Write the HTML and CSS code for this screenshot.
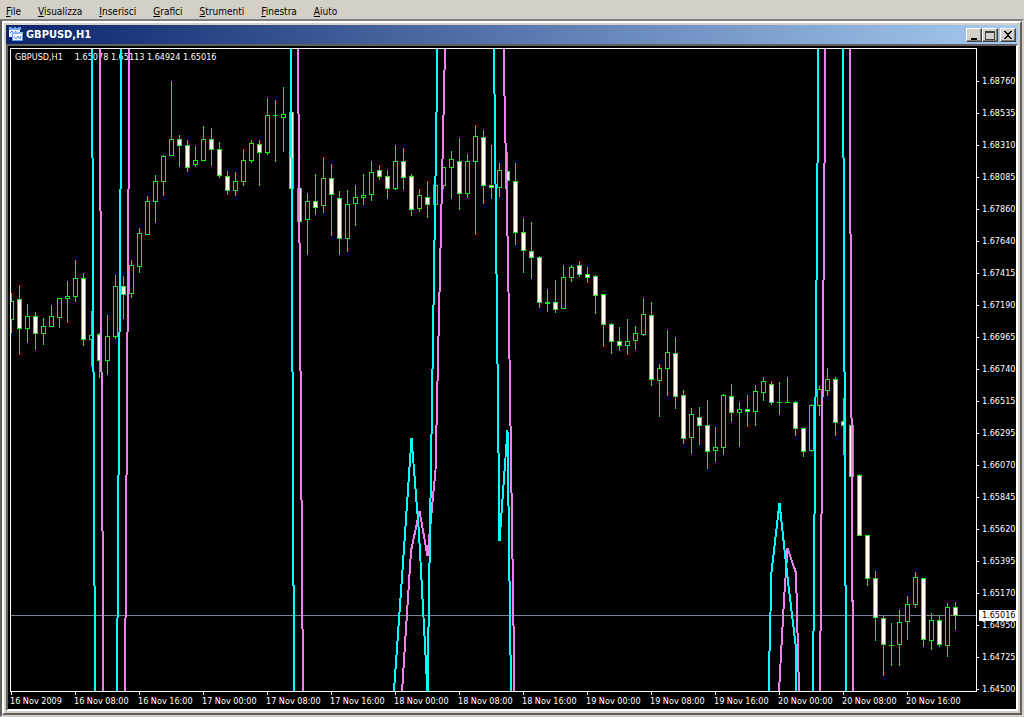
FILE: index.html
```html
<!DOCTYPE html>
<html lang="it">
<head>
<meta charset="utf-8">
<title>GBPUSD,H1</title>
<link rel="stylesheet" href="styles.css">
</head>
<body>
<nav class="menu">
  <button class="menu-item"><u>F</u>ile</button>
  <button class="menu-item"><u>V</u>isualizza</button>
  <button class="menu-item"><u>I</u>nserisci</button>
  <button class="menu-item"><u>G</u>rafici</button>
  <button class="menu-item"><u>S</u>trumenti</button>
  <button class="menu-item"><u>F</u>inestra</button>
  <button class="menu-item"><u>A</u>iuto</button>
</nav>
<main class="workspace">
  <section class="window">
    <header class="titlebar">
      <svg class="title-icon" viewBox="0 0 15 15" aria-hidden="true">
        <path d="M0 1h11v9H0z" fill="#e8f2ff"/>
        <path d="M0 0h3v1h2V0h2v1h2V0h3v3H0z" fill="#6fa8f0"/>
        <path d="M1 6l2-2 2 3 2-3" fill="none" stroke="#3f7fd8"/>
        <path d="M3.500 5.500h10v8h-10z" fill="#fff" stroke="#5f9cf0"/>
        <path d="M3 5h11v2H3z" fill="#8fbcf8"/>
        <path d="M5 9l2 3 2-3 2 3 1-3" fill="none" stroke="#4a86dc"/>
      </svg>
      <h1 class="title">GBPUSD,H1</h1>
      <div class="controls">
        <button class="control" aria-label="Riduci a icona"><svg viewBox="0 0 12 10"><path d="M3 8h6v2H3z"/></svg></button>
        <button class="control" aria-label="Ingrandisci"><svg viewBox="0 0 12 10"><path fill="#404040" fill-rule="evenodd" d="M1 1h10v9H1zM2 3v6h8V3z"/></svg></button>
        <button class="control control-close" aria-label="Chiudi"><svg viewBox="0 0 12 10"><path d="M2 1h2v1h1v1h2V2h1V1h2v1H9v1H8v1H7v2h1v1h1v1h1v1H8V8H7V7H5v1H4v1H2V8h1V7h1V6h1V4H4V3H3V2H2z"/></svg></button>
      </div>
    </header>
    <div class="chart">
      <div class="plot">
        <p class="quote"><span>GBPUSD,H1</span><span>1.65078 1.65113 1.64924 1.65016</span></p>
        <svg class="canvas" id="canvas" viewBox="11 49 965 642" preserveAspectRatio="none">
          <path class="bid" d="M11 615.5H976"/>
          <g id="candles"></g>
          <g class="line violet">
            <path d="M99.5 49L103.5 691M129.5 49L125 691M298 49L303 691"/>
            <path d="M402 692L404 660L411 551L419.500 511L427.500 556L435.500 470L445 49"/>
            <path d="M503.500 49L508 258L514.500 692"/>
            <path d="M779 691L784 600L787.500 548L796 573L799 691"/>
            <path d="M820 691L825.500 49M849.500 49L853 691"/>
          </g>
          <g class="line cyan">
            <path d="M92 49L95 691M121.500 49L117 691M291 49L294 691"/>
            <path d="M394 691L395 676L403 563L411.500 438L419 533L427.500 692L437.500 49"/>
            <path d="M494 49L499.500 541L507.500 430L511 691"/>
            <path d="M768.500 691L771.500 572L779.500 503L787 573L796 648L796 691"/>
            <path d="M813 691L818.500 49M843 49L846 691"/>
          </g>
        </svg>
      </div>
      <div class="prices" id="prices"><span class="current">1.65016</span></div>
      <div class="times" id="times"></div>
    </div>
  </section>
</main>
<script src="chart.js"></script>
</body>
</html>
```
FILE: styles.css
```css
* { box-sizing: border-box; }

body {
  margin: 0;
  height: 100vh;
  display: flex;
  flex-direction: column;
  background: #d4d0c8;
  color: #000;
  font: 10px/12px "DejaVu Sans Condensed", "DejaVu Sans", sans-serif;
}

button {
  font: inherit;
  color: inherit;
  padding: 0;
  border: 0;
  background: none;
}

.menu {
  display: flex;
  align-items: center;
  gap: 17px;
  height: 19px;
  padding: 4px 6px 0;
}

.menu-item u { text-underline-offset: 1px; }

.workspace {
  flex: 1;
  min-height: 0;
  display: flex;
  border: 2px solid;
  border-color: #808080 #d4d0c8 #d4d0c8 #606060;
}

.window {
  flex: 1;
  min-width: 0;
  display: flex;
  flex-direction: column;
  padding: 2px;
  border: 2px solid;
  border-color: #fff #606060 #606060 #fff;
}

.titlebar {
  display: flex;
  align-items: center;
  height: 19px;
  padding: 0 2px 0 3px;
  background: linear-gradient(to right, #0a246a, #a6caf0);
}

.title-icon { width: 15px; height: 15px; }

.title {
  flex: 1;
  margin: 0 0 0 2px;
  color: #fff;
  font-size: 11px;
  line-height: 14px;
  font-weight: bold;
}

.controls { display: flex; }

.control {
  display: flex;
  width: 16px;
  height: 14px;
  padding: 1px;
  background: #d4d0c8;
  border: 1px solid;
  border-color: #fff #404040 #404040 #fff;
  box-shadow: inset -1px -1px #808080;
}

.control svg { width: 12px; height: 10px; shape-rendering: crispEdges; }
.control-close { margin-left: 2px; }

.chart {
  flex: 1;
  min-height: 0;
  display: grid;
  grid-template-columns: minmax(0, 1fr) 39px;
  grid-template-rows: minmax(0, 1fr) 17px;
  padding: 2px 0 0 2px;
  background: #000;
  color: #fff;
  font-size: 9px;
  line-height: 11px;
  border: 2px solid;
  border-color: #606060 #fff #fff #606060;
}

.plot {
  position: relative;
  border: 1px solid #fff;
  overflow: hidden;
}

.quote {
  display: flex;
  gap: 12px;
  margin: 0;
  padding: 3px 4px;
  white-space: nowrap;
}

.canvas {
  position: absolute;
  inset: 0;
  width: 100%;
  height: 100%;
  shape-rendering: crispEdges;
}

.bid { stroke: #778899; }
.line { fill: none; stroke-width: 2; }
.cyan { stroke: #00ffff; }
.violet { stroke: #ee82ee; }
.edge { fill: #00ff00; }
.bull { fill: #000; }
.bear { fill: #fff; }

.prices {
  position: relative;
  grid-column: 2;
  grid-row: 1 / 3;
  display: grid;
  grid-auto-rows: 1fr;
  padding: 17px 0 4px;
}

.price {
  display: flex;
  align-items: center;
  gap: 3px;
}

.price::before {
  content: "";
  width: 2px;
  height: 1px;
  background: #fff;
}

.current {
  position: absolute;
  left: 2px;
  right: 0;
  top: 85%;
  padding-left: 3px;
  background: #fff;
  color: #000;
}

.times {
  display: grid;
  grid-auto-flow: column;
  grid-auto-columns: minmax(0, 1fr);
  padding-right: 7px;
}

.time { white-space: nowrap; }

.time::before {
  content: "";
  display: block;
  width: 1px;
  height: 3px;
  margin: 0 0 1px 1px;
  background: #fff;
}
```
FILE: chart.js
```js
// One row per hourly bar: high, body top, body bottom, low, 1 when the bar closes down.
const bars = [
  [293,301,320,333,0],[285,299,329,355,1],[304,316,329,343,0],[312,316,334,350,1],[318,326,334,345,0],
  [305,316,327,327,0],[298,298,318,328,0],[281,296,299,323,0],[260,278,297,302,0],[273,278,340,346,1],
  [311,335,340,366,0],[333,334,361,378,1],[315,336,361,375,0],[275,286,337,339,0],[276,286,295,319,1],
  [260,265,294,298,0],[228,233,267,273,0],[196,201,235,235,0],[175,181,202,223,0],[155,156,182,196,0],
  [81,139,156,156,0],[135,139,146,167,1],[140,145,168,172,1],[146,160,165,167,0],[126,139,161,161,0],
  [128,139,150,166,1],[142,149,176,178,1],[171,176,191,195,1],[172,181,191,196,0],[149,160,182,186,0],
  [140,143,161,163,0],[140,144,153,186,1],[98,115,153,155,0],[100,115,116,162,0],[87,114,118,152,0],
  [112,112,189,189,1],[188,188,222,222,1],[193,201,220,255,0],[174,201,208,215,1],[157,178,206,213,0],
  [164,178,195,236,1],[191,198,239,255,1],[190,204,239,252,0],[185,197,204,226,0],[174,195,198,205,0],
  [161,172,195,201,0],[165,170,177,180,1],[170,176,189,199,1],[145,161,189,190,0],[148,161,178,190,1],
  [174,176,210,216,1],[189,195,209,212,0],[181,197,205,218,1],[185,185,205,205,0],[167,167,186,189,0],
  [151,159,168,199,0],[138,161,194,210,1],[154,161,194,198,0],[125,136,162,235,0],[130,137,186,204,1],
  [145,185,188,199,1],[163,170,188,197,0],[152,171,181,200,1],[163,181,233,245,1],[218,232,251,273,1],
  [222,251,258,279,1],[256,257,303,308,1],[289,302,304,312,0],[280,302,310,313,1],[265,277,309,309,0],
  [265,267,278,282,0],[261,265,275,277,1],[267,274,278,283,1],[275,276,296,314,1],[294,294,325,347,1],
  [323,324,342,354,1],[327,341,346,351,1],[319,341,346,355,0],[326,333,341,350,0],[298,314,335,336,0],
  [302,315,380,386,1],[364,368,381,417,0],[330,352,369,396,0],[337,353,397,409,1],[390,395,439,444,1],
  [408,414,438,454,0],[407,417,426,445,1],[400,425,452,469,1],[427,447,451,462,0],[394,395,448,455,0],
  [384,396,413,422,1],[402,409,413,447,0],[395,409,412,427,1],[385,391,412,426,0],[377,381,393,401,0],
  [381,384,403,405,1],[382,402,403,415,0],[377,402,403,403,0],[401,402,429,436,1],[428,428,452,457,1],
  [404,405,451,452,0],[386,389,406,416,0],[368,379,391,396,0],[377,379,423,436,1],[398,421,426,455,1],
  [425,425,477,477,1],[474,475,536,536,1],[535,535,579,586,1],[571,578,618,641,1],[616,618,645,676,1],
  [623,645,646,666,0],[610,622,645,666,0],[596,604,622,640,0],[572,577,605,608,0],[578,578,640,647,1],
  [613,620,641,650,0],[615,620,645,647,1],[603,607,646,657,0],[602,607,616,630,1]
];

const candles = document.getElementById("candles");

function rect(x, y, width, height, name) {
  const node = document.createElementNS("http://www.w3.org/2000/svg", "rect");
  node.setAttribute("x", x);
  node.setAttribute("y", y);
  node.setAttribute("width", width);
  node.setAttribute("height", height);
  node.setAttribute("class", name);
  candles.append(node);
}

bars.forEach(([high, top, bottom, low, down], i) => {
  const x = 11 + i * 8;
  rect(x, high, 1, low - high, "edge");
  rect(x - 2, top, 5, bottom - top, "edge");
  if (bottom - top > 2) rect(x - 1, top + 1, 3, bottom - top - 2, down ? "bear" : "bull");
});

function labels(id, name, texts) {
  const parent = document.getElementById(id);
  for (const text of texts) {
    const span = document.createElement("span");
    span.className = name;
    span.textContent = text;
    parent.append(span);
  }
}

labels("prices", "price", [
  "1.68760", "1.68535", "1.68310", "1.68085", "1.67860", "1.67640", "1.67415",
  "1.67190", "1.66965", "1.66740", "1.66515", "1.66295", "1.66070", "1.65845",
  "1.65620", "1.65395", "1.65170", "1.64950", "1.64725", "1.64500"
]);

labels("times", "time", [
  "16 Nov 2009", "16 Nov 08:00", "16 Nov 16:00", "17 Nov 00:00", "17 Nov 08:00",
  "17 Nov 16:00", "18 Nov 00:00", "18 Nov 08:00", "18 Nov 16:00", "19 Nov 00:00",
  "19 Nov 08:00", "19 Nov 16:00", "20 Nov 00:00", "20 Nov 08:00", "20 Nov 16:00"
]);
```
